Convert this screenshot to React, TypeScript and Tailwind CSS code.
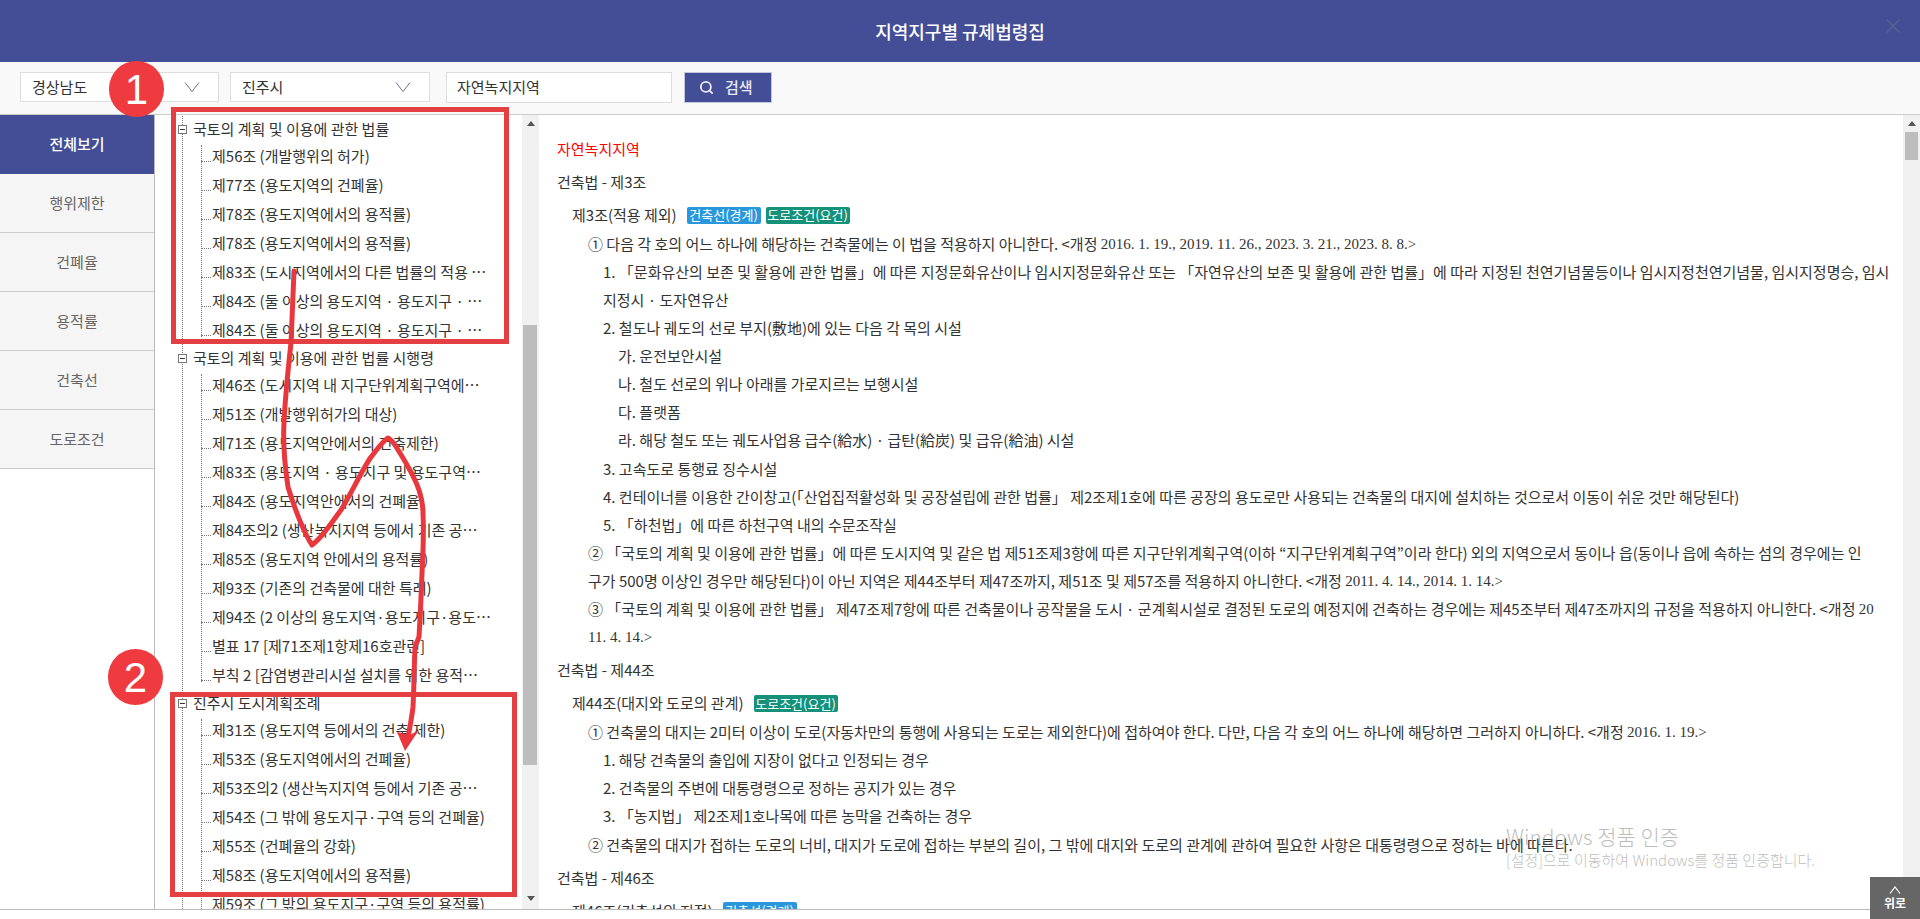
import { ReactNode } from "react";
import { Search, X } from "lucide-react";

const tabs = ["전체보기", "행위제한", "건폐율", "용적률", "건축선", "도로조건"];

const tree = [
  {
    name: "국토의 계획 및 이용에 관한 법률",
    items: [
      "제56조 (개발행위의 허가)",
      "제77조 (용도지역의 건폐율)",
      "제78조 (용도지역에서의 용적률)",
      "제78조 (용도지역에서의 용적률)",
      "제83조 (도시지역에서의 다른 법률의 적용 …",
      "제84조 (둘 이상의 용도지역 · 용도지구 · …",
      "제84조 (둘 이상의 용도지역 · 용도지구 · …",
    ],
  },
  {
    name: "국토의 계획 및 이용에 관한 법률 시행령",
    items: [
      "제46조 (도시지역 내 지구단위계획구역에…",
      "제51조 (개발행위허가의 대상)",
      "제71조 (용도지역안에서의 건축제한)",
      "제83조 (용도지역 · 용도지구 및 용도구역…",
      "제84조 (용도지역안에서의 건폐율)",
      "제84조의2 (생산녹지지역 등에서 기존 공…",
      "제85조 (용도지역 안에서의 용적률)",
      "제93조 (기존의 건축물에 대한 특례)",
      "제94조 (2 이상의 용도지역·용도지구·용도…",
      "별표 17 [제71조제1항제16호관련]",
      "부칙 2 [감염병관리시설 설치를 위한 용적…",
    ],
  },
  {
    name: "진주시 도시계획조례",
    items: [
      "제31조 (용도지역 등에서의 건축 제한)",
      "제53조 (용도지역에서의 건폐율)",
      "제53조의2 (생산녹지지역 등에서 기존 공…",
      "제54조 (그 밖에 용도지구·구역 등의 건폐율)",
      "제55조 (건폐율의 강화)",
      "제58조 (용도지역에서의 용적률)",
      "제59조 (그 밖의 용도지구·구역 등의 용적률)",
    ],
  },
];

const Serif = ({ children }: { children: ReactNode }) => (
  <span className="font-['Liberation_Serif',serif]">{children}</span>
);

const Badge = ({ kind }: { kind: "line" | "road" }) =>
  kind === "line" ? (
    <span className="flex h-[17px] w-[74px] items-center justify-center rounded-[2px] bg-[#2a96dc] text-[13px] text-white">
      건축선(경계)
    </span>
  ) : (
    <span className="flex h-[17px] w-[84px] items-center justify-center rounded-[2px] bg-[#15917a] text-[13px] text-white">
      도로조건(요건)
    </span>
  );

// indent: 0 = 항 (588px), 1 = 호 (603px), 2 = 목 (618px), 3 = 항 이어짐
const Line = ({ indent, children }: { indent: number; children: ReactNode }) => {
  const pad = ["pl-[31px]", "pl-[46px]", "pl-[61px]", "pl-[31px]"][indent];
  return <div className={`flex h-[28.1px] items-center whitespace-pre ${pad}`}>{children}</div>;
};

const Section = ({ law, title, badges, children }: { law: string; title: string; badges: ("line" | "road")[]; children?: ReactNode }) => (
  <div>
    <div className="mt-[5px] flex h-[28px] items-center">{law}</div>
    <div className="mt-[5px] flex h-[28px] items-center gap-[5px] pl-[15px]">
      <span className="mr-[5px]">{title}</span>
      {badges.map((b) => (
        <Badge key={b} kind={b} />
      ))}
    </div>
    <div className="mt-px">{children}</div>
  </div>
);

const Chevron = () => (
  <svg width="16" height="12" viewBox="0 0 16 12" fill="none" stroke="#6b7280" strokeWidth="1">
    <path d="M1 1.5 8 10.5 15 1.5" />
  </svg>
);

const Arrow = ({ up }: { up?: boolean }) => (
  <svg width="8" height="5" viewBox="0 0 8 5" fill="#555">
    <path d={up ? "M4 0 8 5H0Z" : "M0 0H8L4 5Z"} />
  </svg>
);

function TreeGroup({ name, items }: { name: string; items: string[] }) {
  return (
    <div>
      <div className="relative flex h-[26px] items-center pt-px pl-[10px]">
        <span className="absolute left-[-5px] top-[9px] flex h-[9px] w-[9px] items-center justify-center border border-[#777] bg-white">
          <span className="h-px w-[5px] bg-[#333]" />
        </span>
        {name}
      </div>
      <div className="relative ml-[18px]">
        <div className="absolute bottom-[8px] left-0 top-[3px] border-l border-dotted border-[#777]" />
        {items.map((item, i) => (
          <div key={i} className="flex h-[29px] items-center whitespace-nowrap">
            <span className="mr-px w-[10px] translate-y-[5px] border-b border-dotted border-[#777]" />
            {item}
          </div>
        ))}
      </div>
    </div>
  );
}

export default function App() {
  return (
    <div className="relative h-[919px] overflow-hidden bg-white font-['Noto_Sans_CJK_KR',sans-serif] text-[15px] text-[#333]">
      {/* HEADER */}
      <div className="relative flex h-[62px] items-center justify-center bg-[#434e96] text-[18px] font-medium text-white">
        지역지구별 규제법령집
        <X className="absolute right-[15px] top-[14px] text-[#59618f]" size={24} strokeWidth={1.5} />
      </div>

      {/* SEARCH BAR */}
      <div className="flex h-[53px] items-start gap-[11px] border-b border-[#ccc] bg-[#f9f9f9] pl-[20px] pt-[10px]">
        <div className="flex h-[30px] w-[199px] items-center justify-between border border-[#ddd] bg-white pl-[11px] pr-[18px]">
          경상남도
          <Chevron />
        </div>
        <div className="flex h-[30px] w-[200px] items-center justify-between border border-[#ddd] bg-white pl-[11px] pr-[18px]">
          진주시
          <Chevron />
        </div>
        <div className="ml-[5px] flex h-[31px] w-[226px] items-center border border-[#ddd] bg-white pl-[10px]">자연녹지지역</div>
        <div className="ml-px flex h-[31px] w-[88px] items-center gap-[11px] border border-[#c4c8de] bg-[#434e96] pl-[14px] font-medium text-[#e8e9f2]">
          <Search size={15} strokeWidth={3} />
          검색
        </div>
      </div>

      {/* BODY */}
      <div className="flex h-[795px] border-b border-[#bbb]">
        <div className="w-[155px] shrink-0 border-r border-[#bbb]">
          {tabs.map((t, i) => (
            <div
              key={t}
              className={
                i === 0
                  ? "flex h-[59px] items-center justify-center bg-[#434e96] font-medium text-white"
                  : "flex h-[59px] items-center justify-center border-b border-[#ccc] bg-[#f5f5f5] text-[#666]"
              }
            >
              {t}
            </div>
          ))}
        </div>

        {/* TREE */}
        <div className="w-[367px] shrink-0 overflow-hidden pt-px">
          <div className="ml-[27px] border-l border-dotted border-[#777]">
            {tree.map((g) => (
              <TreeGroup key={g.name} name={g.name} items={g.items} />
            ))}
          </div>
        </div>
        <div className="flex w-[17px] shrink-0 flex-col items-center bg-[#f1f1f1]">
          <div className="mt-[6px] flex">
            <Arrow up />
          </div>
          <div className="ml-[-2px] mt-[199px] h-[440px] w-[14px] bg-[#bdbdbd]" />
          <div className="mt-[131px] flex">
            <Arrow />
          </div>
        </div>

        {/* CONTENT */}
        <div className="min-w-0 flex-1 overflow-hidden pl-[18px] pt-[20px]">
          <div className="flex h-[28px] items-center text-[#ff0000]">자연녹지지역</div>

          <Section law="건축법 - 제3조" title="제3조(적용 제외)" badges={["line", "road"]}>
            <Line indent={0}>
              ① 다음 각 호의 어느 하나에 해당하는 건축물에는 이 법을 적용하지 아니한다. {"<"}개정 <Serif>2016. 1. 19., 2019. 11. 26., 2023. 3. 21., 2023. 8. 8.{">"}</Serif>
            </Line>
            <Line indent={1}>1. 「문화유산의 보존 및 활용에 관한 법률」에 따른 지정문화유산이나 임시지정문화유산 또는 「자연유산의 보존 및 활용에 관한 법률」에 따라 지정된 천연기념물등이나 임시지정천연기념물, 임시지정명승, 임시</Line>
            <Line indent={1}>지정시 · 도자연유산</Line>
            <Line indent={1}>2. 철도나 궤도의 선로 부지(敷地)에 있는 다음 각 목의 시설</Line>
            <Line indent={2}>가. 운전보안시설</Line>
            <Line indent={2}>나. 철도 선로의 위나 아래를 가로지르는 보행시설</Line>
            <Line indent={2}>다. 플랫폼</Line>
            <Line indent={2}>라. 해당 철도 또는 궤도사업용 급수(給水) · 급탄(給炭) 및 급유(給油) 시설</Line>
            <Line indent={1}>3. 고속도로 통행료 징수시설</Line>
            <Line indent={1}>4. 컨테이너를 이용한 간이창고(「산업집적활성화 및 공장설립에 관한 법률」 제2조제1호에 따른 공장의 용도로만 사용되는 건축물의 대지에 설치하는 것으로서 이동이 쉬운 것만 해당된다)</Line>
            <Line indent={1}>5. 「하천법」에 따른 하천구역 내의 수문조작실</Line>
            <Line indent={0}>② 「국토의 계획 및 이용에 관한 법률」에 따른 도시지역 및 같은 법 제51조제3항에 따른 지구단위계획구역(이하 “지구단위계획구역”이라 한다) 외의 지역으로서 동이나 읍(동이나 읍에 속하는 섬의 경우에는 인</Line>
            <Line indent={3}>
              구가 500명 이상인 경우만 해당된다)이 아닌 지역은 제44조부터 제47조까지, 제51조 및 제57조를 적용하지 아니한다. {"<"}개정 <Serif>2011. 4. 14., 2014. 1. 14.{">"}</Serif>
            </Line>
            <Line indent={0}>
              ③ 「국토의 계획 및 이용에 관한 법률」 제47조제7항에 따른 건축물이나 공작물을 도시 · 군계획시설로 결정된 도로의 예정지에 건축하는 경우에는 제45조부터 제47조까지의 규정을 적용하지 아니한다. {"<"}개정 <Serif>20</Serif>
            </Line>
            <Line indent={3}>
              <Serif>11. 4. 14.{">"}</Serif>
            </Line>
          </Section>

          <Section law="건축법 - 제44조" title="제44조(대지와 도로의 관계)" badges={["road"]}>
            <Line indent={0}>
              ① 건축물의 대지는 2미터 이상이 도로(자동차만의 통행에 사용되는 도로는 제외한다)에 접하여야 한다. 다만, 다음 각 호의 어느 하나에 해당하면 그러하지 아니하다. {"<"}개정 <Serif>2016. 1. 19.{">"}</Serif>
            </Line>
            <Line indent={1}>1. 해당 건축물의 출입에 지장이 없다고 인정되는 경우</Line>
            <Line indent={1}>2. 건축물의 주변에 대통령령으로 정하는 공지가 있는 경우</Line>
            <Line indent={1}>3. 「농지법」 제2조제1호나목에 따른 농막을 건축하는 경우</Line>
            <Line indent={0}>② 건축물의 대지가 접하는 도로의 너비, 대지가 도로에 접하는 부분의 길이, 그 밖에 대지와 도로의 관계에 관하여 필요한 사항은 대통령령으로 정하는 바에 따른다.</Line>
          </Section>

          <Section law="건축법 - 제46조" title="제46조(건축선의 지정)" badges={["line"]} />
        </div>

        <div className="flex w-[17px] shrink-0 flex-col items-center bg-[#f1f1f1]">
          <div className="mt-[6px] flex">
            <Arrow up />
          </div>
          <div className="mt-[6px] h-[28px] w-[13px] bg-[#bdbdbd]" />
        </div>
      </div>

      {/* 빨간 주석 */}
      <div className="absolute left-[171px] top-[107px] h-[237px] w-[338px] border-[5px] border-[#e43f43]" />
      <div className="absolute left-[170px] top-[692px] h-[205px] w-[347px] border-[5px] border-[#e43f43]" />
      <div className="absolute left-[109px] top-[61px] flex h-[56px] w-[55px] items-center justify-center rounded-full bg-[#ef3b3f] font-['Liberation_Sans',sans-serif] text-[42px] text-white">
        1
      </div>
      <div className="absolute left-[108px] top-[649px] flex h-[56px] w-[55px] items-center justify-center rounded-full bg-[#ef3b3f] font-['Liberation_Sans',sans-serif] text-[42px] text-white">
        2
      </div>
      <svg className="absolute left-0 top-0" width="1920" height="919" fill="none" pointerEvents="none">
        <path
          d="M294 271C293 295 292 320 291 343C288 370 285 400 284 423C283 440 284 460 288 487C295 510 305 535 312 545C322 538 332 522 341 510C352 492 362 470 371 457C378 448 384 440 388 438C393 440 396 447 400 453C408 466 415 478 419 490C422 500 423 505 423 513C424 535 423 555 422 573C421 600 420 620 419 637L415 647C414 670 414 690 413 707C412 716 410 726 408 738"
          stroke="#e8383d"
          strokeWidth="5"
          strokeLinecap="round"
          strokeLinejoin="round"
        />
        <path d="M405 751 419 730 410 735 397 732Z" fill="#e8383d" />
      </svg>

      {/* Windows 정품 인증 */}
      <div className="pointer-events-none absolute left-[1506px] top-[822px] whitespace-nowrap leading-[28px] text-[rgba(120,120,120,0.5)]">
        <div className="text-[21px] font-light">Windows 정품 인증</div>
        <div className="text-[15px] font-light leading-[20px]">[설정]으로 이동하여 Windows를 정품 인증합니다.</div>
      </div>

      {/* 위로 */}
      <div className="absolute bottom-0 right-0 flex h-[42px] w-[50px] flex-col items-center justify-center bg-[#666] text-[12px] font-bold leading-[14px] text-white">
        <svg width="12" height="8" viewBox="0 0 12 8" fill="none" stroke="#fff" strokeWidth="1.2">
          <path d="M1 7.5 6 1l5 6.5" />
        </svg>
        <span className="mt-[2px]">위로</span>
      </div>
    </div>
  );
}
